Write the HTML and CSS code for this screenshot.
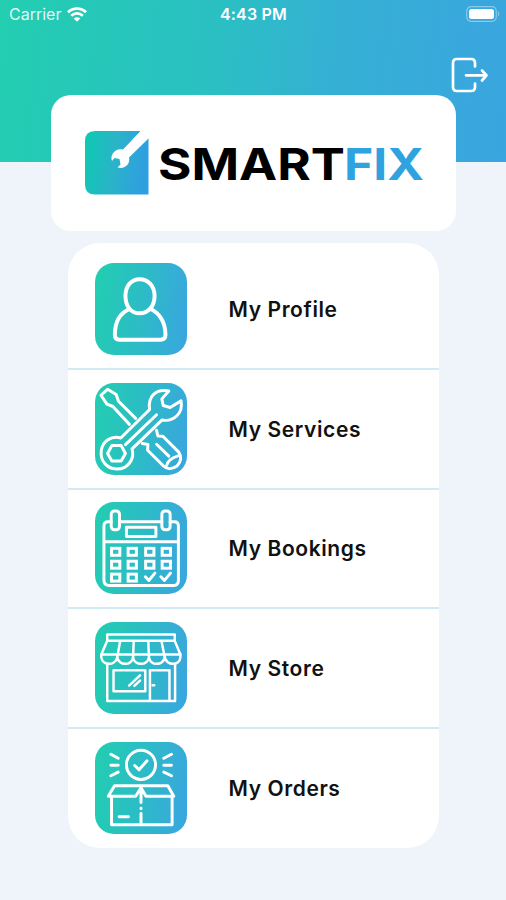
FILE: index.html
```html
<!DOCTYPE html>
<html lang="en">
<head>
    <meta charset="UTF-8">
    <meta name="viewport" content="width=device-width, initial-scale=1.0">
    <title>SmartFix</title>
    <link rel="stylesheet" href="styles.css">
</head>
<body>

    <header class="header">
        <div class="status-bar">
            <div class="carrier">
                <span>Carrier</span>
                <svg class="wifi" viewBox="0 0 20 15" fill="none" stroke="#fff" stroke-width="2.9">
                    <path d="M1 5.2C6 .4 14 .4 19 5.2"/>
                    <path d="M4.2 8.7C7.6 5.6 12.4 5.6 15.8 8.7"/>
                    <path d="M10 14.8L6.7 11.5C8.6 9.9 11.4 9.9 13.3 11.5Z" fill="#fff" stroke="none"/>
                </svg>
            </div>
            <span class="time">4:43 PM</span>
            <svg class="battery" viewBox="0 0 34 16">
                <rect x=".7" y=".7" width="29.6" height="14.6" rx="4.5" fill="none" stroke="#fff" stroke-opacity=".4" stroke-width="1.2"/>
                <rect x="3" y="3" width="25" height="10" rx="2.5" fill="#fff"/>
                <path d="M32 5.3C33.6 6 33.6 10 32 10.7Z" fill="#fff" fill-opacity=".4"/>
            </svg>
        </div>
        <svg class="logout" viewBox="0 0 38 36" fill="none" stroke="#fff" stroke-width="2.7" stroke-linecap="round" stroke-linejoin="round">
            <path d="M24 9.5V6Q24 2 20 2H6Q2 2 2 6V30Q2 34 6 34H20Q24 34 24 30V26.5"/>
            <path d="M15 18.3H35.5M31 13.5L35.5 18.3L31 23.5"/>
        </svg>
    </header>

    <div class="logo-card">
        <svg class="logo" viewBox="0 0 340 65">
            <defs>
                <linearGradient id="logo-bg" x1="0" y1="0" x2="1" y2=".15">
                    <stop offset="0" stop-color="#0bcbb0"/>
                    <stop offset=".5" stop-color="#2ab4c8"/>
                    <stop offset="1" stop-color="#2f9fe0"/>
                </linearGradient>
            </defs>
            <path d="M10 0H63.5V63.5H10Q0 63.5 0 53.5V10Q0 0 10 0Z" fill="url(#logo-bg)"/>
            <!-- wrench -->
            <path d="M55.5 0H64.5V6.5L44 26.5C45.5 33 40 38.5 32.5 36.5L35.5 33.5L34.5 28L29.5 27L27 30C24.5 23 31 16.5 38 18.5Z" fill="#fff"/>
            <text class="logo-smart" x="73" y="49" textLength="187" lengthAdjust="spacingAndGlyphs">SMART</text>
            <text class="logo-fix" x="259" y="49" textLength="80" lengthAdjust="spacingAndGlyphs">FIX</text>
        </svg>
    </div>

    <div class="menu">
        <div class="menu-item">
            <svg class="icon" viewBox="30 30 278 278">
                <path d="M165 79C189 79 210 98 210 130C210 162 190 182 165 182C140 182 122 162 122 130C122 98 141 79 165 79Z"/>
                <path d="M134 169C102 183 90 215 90 247Q90 262 104 262H227Q243 262 243 247C243 215 229 183 198 169"/>
            </svg>
            <span>My Profile</span>
        </div>
        <div class="menu-item">
            <svg class="icon medium" viewBox="30 30 278 278">
                <!-- screwdriver -->
                <path d="M134 155L84 101L66 94L48 67L68 49L94 65L101 85L153 137"/>
                <path d="M173 213L190 216L189 233L237 281Q253 297 278 281Q297 260 283 239L235 191L220 190L216 173"/>
                <path d="M216 215L253 251M246 280Q251 259 281 250"/>
                <!-- wrench -->
                <path d="M108 196L195 110C189 70 214 47 253 54L232 78L236 98L257 104L290 84C297 121 269 148 232 142L142 229C151 263 127 291 95 290C64 289 45 263 49 234C53 204 80 189 108 196Z"/>
                <path d="M122 216L216 126M81 219H109L122 243L109 266H81L68 243Z"/>
            </svg>
            <span>My Services</span>
        </div>
        <div class="menu-item">
            <svg class="icon medium" viewBox="30 30 278 278">
                <path d="M79 90H69Q57 90 57 103V266Q57 282 71 282H268Q282 282 282 267V103Q282 90 270 90H257M105 90H232M57 150H282"/>
                <rect x="79" y="57" width="25" height="57" rx="10"/>
                <rect x="232" y="57" width="25" height="57" rx="10"/>
                <rect x="125" y="106" width="89" height="28"/>
                <g class="days">
                    <rect x="80" y="170" width="25" height="21"/>
                    <rect x="130" y="170" width="25" height="21"/>
                    <rect x="183" y="170" width="25" height="21"/>
                    <rect x="233" y="170" width="25" height="21"/>
                    <rect x="80" y="209" width="25" height="21"/>
                    <rect x="130" y="209" width="25" height="21"/>
                    <rect x="183" y="209" width="25" height="21"/>
                    <rect x="233" y="209" width="25" height="21"/>
                    <rect x="80" y="248" width="25" height="21"/>
                    <rect x="130" y="248" width="25" height="21"/>
                </g>
                <path d="M182 256L193 267L211 245M229 256L240 267L258 245"/>
            </svg>
            <span>My Bookings</span>
        </div>
        <div class="menu-item">
            <svg class="icon thin" viewBox="30 30 278 278">
                <path d="M67 68H271V87H67ZM67 87L49 128V137C53 163 91 163 97 137C104 163 139 163 145 137C150 163 187 163 193 137C199 163 234 163 241 137C248 163 285 163 288 137V128L271 87"/>
                <path d="M49 128H288M106 88L97 137M147 88L145 137M191 88L193 137M231 88L241 137"/>
                <path d="M67 157V269H272V157M86 176H182V239H86ZM196 269V176H255V269"/>
                <path d="M133 222L166 191M149 223L166 207M204 221H209"/>
            </svg>
            <span>My Store</span>
        </div>
        <div class="menu-item">
            <svg class="icon medium" viewBox="30 30 278 278">
                <circle cx="169" cy="99" r="44"/>
                <path d="M150 101L163 114L187 87M78 67L100 79M78 100H100M78 132L100 121M261 67L238 79M261 100H238M261 132L238 121"/>
                <path d="M80 195V280H263V195M89 162H250L268 194H184L169 168L153 194H70ZM169 168V213M169 230V232M169 246V280M103 256H131"/>
            </svg>
            <span>My Orders</span>
        </div>
    </div>

</body>
</html>
```

FILE: styles.css
```css
* {
    box-sizing: border-box;
}
body {
    margin: 0;
    height: 900px;
    background-color: #eef4f9;
    font-family: Inter, "Liberation Sans", sans-serif;
    display: flex;
    flex-direction: column;
    align-items: center;
    overflow: hidden;
}
.header {
    width: 100%;
    height: 162px;
    flex-shrink: 0;
    background: linear-gradient(97deg, #22ceb0 0%, #2bbfc4 43%, #35b0d4 65%, #3aa5e0 100%);
    color: #fff;
    display: flex;
    flex-direction: column;
}
.status-bar {
    height: 28px;
    padding: 0 6px 0 9px;
    display: grid;
    grid-template-columns: 1fr auto 1fr;
    align-items: center;
    font-size: 16px;
}
.carrier {
    display: flex;
    align-items: center;
    gap: 6px;
    color: rgba(255, 255, 255, 0.88);
}
.wifi {
    width: 20px;
    height: 15px;
}
.time {
    font-weight: 600;
    letter-spacing: 0.2px;
    margin-right: 2px;
}
.battery {
    width: 34px;
    height: 16px;
    justify-self: end;
}
.logout {
    width: 38px;
    height: 36px;
    margin: 29px 17px 0 auto;
}
.logo-card {
    width: 405px;
    height: 136px;
    flex-shrink: 0;
    margin-top: -67px;
    margin-bottom: 12px;
    padding-left: 34px;
    background-color: #fff;
    border-radius: 20px;
    display: flex;
    align-items: center;
}
.logo {
    width: 340px;
    height: 65px;
}
.logo-smart,
.logo-fix {
    font-family: Inter, sans-serif;
    font-weight: 700;
    font-size: 44px;
}
.logo-fix {
    fill: #2fa3e0;
}
.menu {
    width: 371px;
    height: 605px;
    flex-shrink: 0;
    padding-top: 7px;
    background-color: #fff;
    border-radius: 32px;
}
.menu-item {
    height: 119.75px;
    padding-left: 27px;
    border-bottom: 2px solid #d3eaf5;
    display: flex;
    align-items: center;
    gap: 42px;
    color: #111;
    font-size: 21px;
    font-weight: 600;
    letter-spacing: 0.6px;
}
.menu-item span {
    padding-top: 1px;
}
.menu-item:last-child {
    border-bottom: none;
    padding-bottom: 2px;
}
.icon {
    width: 92px;
    height: 92px;
    border-radius: 19px;
    background: linear-gradient(97deg, #22ceb0 0%, #2cbcc6 50%, #3aa5e0 100%);
    fill: none;
    stroke: #fff;
    stroke-width: 12;
    stroke-linecap: round;
    stroke-linejoin: round;
}
.icon.medium {
    stroke-width: 9;
}
.icon.thin {
    stroke-width: 7.5;
}
.days {
    stroke-width: 9;
    stroke-linejoin: miter;
}
```
